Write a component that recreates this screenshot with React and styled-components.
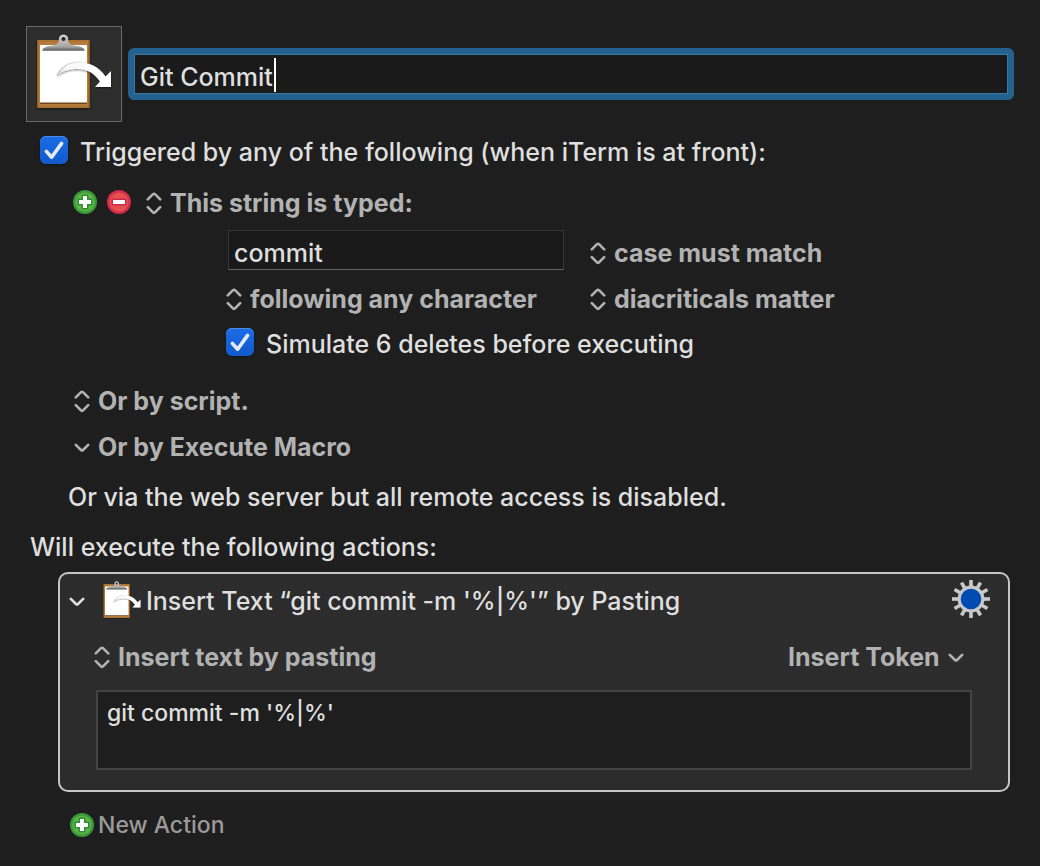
import React, { useState } from "react";
import styled, { createGlobalStyle } from "styled-components";

const GlobalStyle = createGlobalStyle`
  *, *::before, *::after { box-sizing: border-box; }
  body {
    margin: 0;
    background: #1e1e1e;
    color: #dfdfdf;
    font-family: Inter, "Liberation Sans", sans-serif;
    font-size: 25px;
    font-weight: 500;
    line-height: 32px;
  }
  input, select, button, textarea { font: inherit; color: inherit; }
`;

const Editor = styled.main`
  padding: 26px;
  display: flex;
  flex-direction: column;
`;

const Header = styled.header`
  display: flex;
  align-items: center;
  gap: 6px;
`;

const MacroIconButton = styled.button`
  width: 96px;
  height: 96px;
  flex: none;
  padding: 0;
  border: 1px solid #6a6a6a;
  background: #2d2d2d;

  svg {
    display: block;
    margin: -1px;
  }
`;

const NameField = styled.label`
  flex: 1;
  min-width: 0;
  height: 52px;
  display: flex;
  align-items: center;
  padding: 5px 6px 0;
  background: #1a1a1a;
  border: 6px solid #24618e;
  border-radius: 6px;
  box-shadow: inset 0 0 0 1px #3b78a3;
`;

const NameInput = styled.input`
  field-sizing: content;
  max-width: 100%;
  padding: 0;
  border: 0;
  outline: 0;
  background: none;
  caret-color: transparent;
`;

const Caret = styled.span`
  width: 2px;
  height: 34px;
  margin: 0 0 4px 1px;
  background: #fff;
`;

const CheckRow = styled.label`
  display: flex;
  align-items: center;
  gap: 12px;
  height: 32px;
`;

const TickFrame = styled.span`
  position: relative;
  width: 28px;
  height: 28px;
  flex: none;
  margin-bottom: 4px;

  svg {
    position: absolute;
    inset: 0;
    pointer-events: none;
  }
`;

const TickBox = styled.input`
  appearance: none;
  display: block;
  width: 28px;
  height: 28px;
  margin: 0;
  border-radius: 6px;
  background: ${(p) => (p.checked ? "linear-gradient(#1b6de6, #1259cc)" : "#4a4a4a")};
  box-shadow: inset 0 1px 0 #4a8bea, 0 1px 2px #00000066;
`;

const Triggers = styled.section`
  display: flex;
  flex-direction: column;
  padding: 14px 0 0 14px;
`;

const TriggerHead = styled.div`
  display: flex;
  align-items: center;
  height: 32px;
  margin-top: 19px;
  padding-left: 33px;
`;

const BadgeButton = styled.button`
  display: flex;
  padding: 0;
  border: 0;
  background: none;
  margin: 0 10px 2px 0;

  & + span { margin-left: 5px; }
`;

const StringOptions = styled.div`
  display: grid;
  grid-template-columns: 364px 1fr;
  row-gap: 7px;
  align-items: center;
  margin-top: 11px;
  padding-left: 186px;
`;

const StringInput = styled.input`
  width: 336px;
  height: 40px;
  margin: 0 0 6px 2px;
  padding: 5px 5px 0;
  background: #1a1a1a;
  border: 1px solid #353535;
  border-bottom-color: #626262;
  outline: 0;
`;

const WideCell = styled.div`
  grid-column: 1 / -1;
  padding-top: 6px;
`;

const OtherTriggers = styled.div`
  display: flex;
  flex-direction: column;
  align-items: flex-start;
  gap: 14px;
  margin-top: 25px;
  padding-left: 34px;
`;

const MenuFrame = styled.span`
  display: inline-flex;
  align-items: center;
  gap: 8px;
  height: 32px;
  color: #b2b2b2;
  flex-direction: ${(p) => (p.$trailing ? "row-reverse" : "row")};

  svg { flex: none; }
`;

const MenuSelect = styled.select`
  appearance: none;
  padding: 0;
  border: 0;
  outline: 0;
  background: none;
  font-weight: 700;
`;

const Note = styled.p`
  margin: 18px 0 0;
  padding-left: ${(p) => p.$indent}px;
`;

const ActionPanel = styled.section`
  margin: 9px 4px 0 32px;
  padding: 2px 36px 20px;
  background: #2c2c2c;
  border: 2px solid #c6c6c6;
  border-radius: 10px;
`;

const ActionTitle = styled.div`
  display: flex;
  align-items: center;
  height: 50px;
  margin: 0 -19px 0 -27px;
`;

const IconButton = styled.button`
  display: flex;
  flex: none;
  padding: 0;
  border: 0;
  background: none;
`;

const GearButton = styled(IconButton)`
  margin-bottom: 4px;
`;

const ActionName = styled.h2`
  flex: 1;
  margin: 0;
  font-size: inherit;
  font-weight: inherit;
`;

const ActionIcon = styled.span`
  display: flex;
  margin: 0 0 0 13px;
`;

const ActionTools = styled.div`
  display: flex;
  justify-content: space-between;
  margin-top: 15px;
  padding-right: 8px;
  margin-left: -2px;
`;

const TextBody = styled.textarea`
  display: block;
  width: 100%;
  height: 80px;
  margin-top: 17px;
  padding: 5px 9px;
  resize: none;
  outline: 0;
  background: #1e1e1e;
  border: 2px solid #434343;
  font-size: 23px;
`;

const NewAction = styled.button`
  align-self: flex-start;
  display: flex;
  align-items: center;
  gap: 4px;
  margin: 17px 0 0 44px;
  padding: 0;
  border: 0;
  background: none;
  color: #9a9a9a;
  font-size: 23px;
`;

function Clipboard({ size, id }) {
  return (
    <svg width={size} height={size} viewBox="0 0 96 96" aria-hidden="true">
      <defs>
        <linearGradient id={`${id}-wood`} x1="0" y1="0" x2="1" y2="0">
          <stop offset="0" stopColor="#8c5c26" />
          <stop offset="0.04" stopColor="#b57b3a" />
          <stop offset="0.96" stopColor="#b57b3a" />
          <stop offset="1" stopColor="#7f511e" />
        </linearGradient>
        <linearGradient id={`${id}-metal`} x1="0" y1="0" x2="0" y2="1">
          <stop offset="0" stopColor="#d6d6d6" />
          <stop offset="0.7" stopColor="#acacac" />
          <stop offset="1" stopColor="#7c7c7c" />
        </linearGradient>
        <linearGradient id={`${id}-arrow`} x1="0" y1="0" x2="1" y2="0">
          <stop offset="0" stopColor="#d8d8d8" />
          <stop offset="0.2" stopColor="#fafafa" />
          <stop offset="1" stopColor="#fff" />
        </linearGradient>
        <linearGradient id={`${id}-edge`} x1="0" y1="0" x2="1" y2="0">
          <stop offset="0" stopColor="#ababab" />
          <stop offset="1" stopColor="#ababab" stopOpacity="0" />
        </linearGradient>
        <filter id={`${id}-shade`} x="-20%" y="-20%" width="140%" height="160%">
          <feDropShadow dx="0" dy="1" stdDeviation="1" floodOpacity="0.55" />
        </filter>
      </defs>
      <rect x="11" y="14" width="53" height="68" rx="1" fill={`url(#${id}-wood)`} filter={`url(#${id}-shade)`} />
      <rect x="12" y="15" width="51" height="66" fill="none" stroke="#94622a" strokeWidth="0.6" />
      <rect x="14" y="76" width="47" height="2" fill="#6e4619" />
      <rect x="14" y="19" width="47" height="57.5" fill="#fff" />
      <path d="M16.5 24.5C18 20.5 22 20 27 19.5C31 19 32.5 17 33 14.5A4.7 4.7 0 1 1 42 14.5C42.5 17 44 19 48 19.5C53 20 57 20.5 58.5 24.5Z" fill={`url(#${id}-metal)`} />
      <rect x="16.5" y="22.6" width="42" height="2.2" rx="1" fill="#747474" />
      <circle cx="37.5" cy="13" r="2.1" fill="#262626" />
      <path d="M31 50C35 40 44 36.3 52 36.3C64 36.3 73 41 79.5 50.5L85 45V61H69L74 55.5C68 47 61 43 52 43C44 43 37 44.5 31 50Z" fill={`url(#${id}-arrow)`} filter={`url(#${id}-shade)`} />
      <path d="M31 50C35 40 44 36.3 52 36.3C56 36.3 59 37 62 38" fill="none" stroke={`url(#${id}-edge)`} strokeWidth="0.8" />
    </svg>
  );
}

function PlusBadge() {
  return (
    <svg width="24" height="24" viewBox="0 0 24 24" aria-hidden="true">
      <circle cx="12" cy="12" r="12" fill="#389a3a" />
      <circle cx="12" cy="12" r="9.6" fill="#60b544" />
      <path d="M8.5 4.5h7v4h4v7h-4v4h-7v-4h-4v-7h4z" fill="#2f8f38" />
      <path d="M10 6h4v4h4v4h-4v4h-4v-4H6v-4h4z" fill="#fff" />
    </svg>
  );
}

function MinusBadge() {
  return (
    <svg width="24" height="24" viewBox="0 0 24 24" aria-hidden="true">
      <circle cx="12" cy="12" r="12" fill="#d32c4d" />
      <circle cx="12" cy="12" r="9.6" fill="#e5514f" />
      <path d="M4.5 8.5h15v7h-15z" fill="#cf2a4c" />
      <path d="M6 10h12v4H6z" fill="#fff" />
    </svg>
  );
}

const stroke = { fill: "none", stroke: "currentColor", strokeLinecap: "round", strokeLinejoin: "round" };

function UpDown() {
  return (
    <svg width="16" height="24" viewBox="0 0 16 24" strokeWidth="2.6" {...stroke} aria-hidden="true">
      <path d="M1.8 8.4L7 3.2Q8 2.3 9 3.2L14.2 8.4M1.8 16.2L7 21.4Q8 22.3 9 21.4L14.2 16.2" />
    </svg>
  );
}

function Down() {
  return (
    <svg width="16" height="24" viewBox="0 0 16 24" strokeWidth="2.6" {...stroke} aria-hidden="true">
      <path d="M1.8 9.8L7 15Q8 15.9 9 15L14.2 9.8" />
    </svg>
  );
}

function Gear() {
  return (
    <svg width="40" height="40" viewBox="0 0 40 40" aria-hidden="true">
      <g stroke="#c9c9c9" strokeWidth="3.6">
        {Array.from({ length: 12 }, (_, i) => (
          <path key={i} d="M20 1V9" transform={`rotate(${i * 30} 20 20)`} />
        ))}
      </g>
      <circle cx="20" cy="20" r="13.4" fill="#c9c9c9" />
      <circle cx="20" cy="20" r="10.3" fill="#004bb0" />
    </svg>
  );
}

function Check({ children }) {
  const [on, setOn] = useState(true);
  return (
    <CheckRow>
      <TickFrame>
        <TickBox type="checkbox" checked={on} onChange={(e) => setOn(e.target.checked)} />
        {on && (
          <svg width="28" height="28" viewBox="0 0 28 28" aria-hidden="true">
            <path d="M6.4 15.4L11.6 21.2L21.6 7.4" strokeWidth="3.6" {...stroke} stroke="#e4ecfa" />
          </svg>
        )}
      </TickFrame>
      <span>{children}</span>
    </CheckRow>
  );
}

function Menu({ label, value, down, trailing }) {
  return (
    <MenuFrame $trailing={trailing}>
      {down ? <Down /> : <UpDown />}
      <MenuSelect aria-label={label}>
        <option>{value}</option>
      </MenuSelect>
    </MenuFrame>
  );
}

export default function App() {
  return (
    <>
      <GlobalStyle />
      <Editor>
        <Header>
          <MacroIconButton aria-label="Macro icon">
            <Clipboard size={96} id="macro" />
          </MacroIconButton>
          <NameField>
            <NameInput aria-label="Macro name" defaultValue="Git Commit" />
            <Caret />
          </NameField>
        </Header>

        <Triggers>
          <Check>Triggered by any of the following (when iTerm is at front):</Check>
          <TriggerHead>
            <BadgeButton aria-label="Add trigger"><PlusBadge /></BadgeButton>
            <BadgeButton aria-label="Remove trigger"><MinusBadge /></BadgeButton>
            <Menu label="Trigger type" value="This string is typed:" />
          </TriggerHead>
          <StringOptions>
            <StringInput aria-label="Typed string" defaultValue="commit" />
            <Menu label="Case" value="case must match" />
            <Menu label="Preceding character" value="following any character" />
            <Menu label="Diacriticals" value="diacriticals matter" />
            <WideCell>
              <Check>Simulate 6 deletes before executing</Check>
            </WideCell>
          </StringOptions>
          <OtherTriggers>
            <Menu label="Script trigger" value="Or by script." />
            <Menu label="Execute Macro trigger" value="Or by Execute Macro" down />
          </OtherTriggers>
        </Triggers>

        <Note $indent={42}>Or via the web server but all remote access is disabled.</Note>
        <Note $indent={4}>Will execute the following actions:</Note>

        <ActionPanel>
          <ActionTitle>
            <IconButton aria-label="Collapse action"><Down /></IconButton>
            <ActionIcon><Clipboard size={48} id="action" /></ActionIcon>
            <ActionName>Insert Text “git commit -m '%|%'” by Pasting</ActionName>
            <GearButton aria-label="Action options"><Gear /></GearButton>
          </ActionTitle>
          <ActionTools>
            <Menu label="Insertion method" value="Insert text by pasting" />
            <Menu label="Insert Token" value="Insert Token" down trailing />
          </ActionTools>
          <TextBody aria-label="Text to insert" defaultValue="git commit -m '%|%'" />
        </ActionPanel>

        <NewAction><PlusBadge />New Action</NewAction>
      </Editor>
    </>
  );
}
